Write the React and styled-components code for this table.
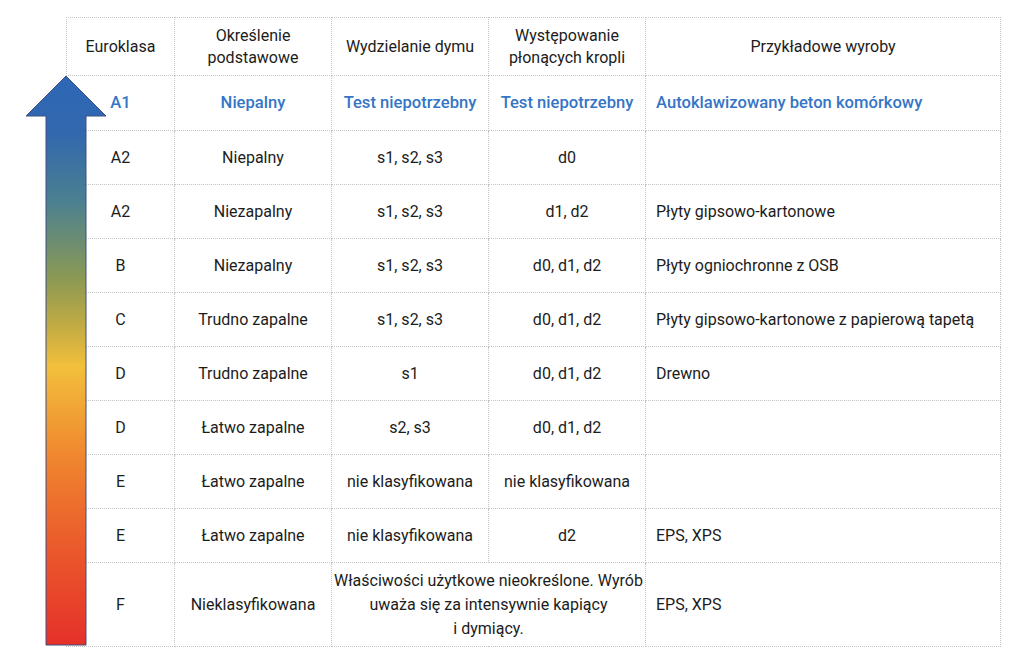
import React from "react";
import styled, { createGlobalStyle } from "styled-components";

const Global = createGlobalStyle`
  html, body { margin: 0; padding: 0; background: #fff; }
  body { font-family: "Roboto", "Liberation Sans", sans-serif; color: #1c1c1c; }
`;

const Page = styled.div`
  width: 1024px;
  height: 667px;
  padding: 17px 0 0 66px;
  box-sizing: border-box;
`;

const Stage = styled.div`
  position: relative;
  width: 934px;
`;

const Table = styled.table`
  border-collapse: collapse;
  table-layout: fixed;
  width: 934px;
  font-size: 16px;
`;

const Col = styled.col`
  width: ${(p) => p.$w}px;
`;

const Row = styled.tr`
  height: ${(p) => p.$h || 54}px;
`;

const Cell = styled.td`
  border: 1px dotted #c4c4c4;
  padding: 0 ${(p) => (p.$left ? "10px" : "2px")};
  text-align: ${(p) => (p.$left ? "left" : "center")};
  vertical-align: middle;
  line-height: ${(p) => p.$lh || 22}px;
  color: ${(p) => (p.$hl ? "#3575c6" : "#1c1c1c")};
  font-size: ${(p) => (p.$hl ? "16.6px" : "inherit")};
  font-weight: ${(p) => (p.$hl ? 500 : 400)};
  white-space: nowrap;
`;

const HeadCell = styled(Cell).attrs({ as: "th" })`
  font-weight: 400;
`;

const Arrow = styled.svg`
  position: absolute;
  left: -41px;
  top: 59px;
  overflow: visible;
`;

const rows = [
  { k: "A1", d: "Niepalny", s: "Test niepotrzebny", p: "Test niepotrzebny", w: "Autoklawizowany beton komórkowy", hl: true },
  { k: "A2", d: "Niepalny", s: "s1, s2, s3", p: "d0", w: "" },
  { k: "A2", d: "Niezapalny", s: "s1, s2, s3", p: "d1, d2", w: "Płyty gipsowo-kartonowe" },
  { k: "B", d: "Niezapalny", s: "s1, s2, s3", p: "d0, d1, d2", w: "Płyty ogniochronne z OSB" },
  { k: "C", d: "Trudno zapalne", s: "s1, s2, s3", p: "d0, d1, d2", w: "Płyty gipsowo-kartonowe z papierową tapetą" },
  { k: "D", d: "Trudno zapalne", s: "s1", p: "d0, d1, d2", w: "Drewno" },
  { k: "D", d: "Łatwo zapalne", s: "s2, s3", p: "d0, d1, d2", w: "" },
  { k: "E", d: "Łatwo zapalne", s: "nie klasyfikowana", p: "nie klasyfikowana", w: "" },
  { k: "E", d: "Łatwo zapalne", s: "nie klasyfikowana", p: "d2", w: "EPS, XPS" },
];

function FireArrow() {
  return (
    <Arrow width="82" height="570" viewBox="0 0 82 570">
      <defs>
        <linearGradient id="fg" x1="0" y1="0" x2="0" y2="1">
          <stop offset="0" stopColor="#2d67b7" />
          <stop offset="0.1" stopColor="#3268ad" />
          <stop offset="0.22" stopColor="#4b8091" />
          <stop offset="0.36" stopColor="#8e9a52" />
          <stop offset="0.45" stopColor="#c9ae42" />
          <stop offset="0.51" stopColor="#f2c03c" />
          <stop offset="0.66" stopColor="#f0892f" />
          <stop offset="0.8" stopColor="#eb612c" />
          <stop offset="1" stopColor="#e5302a" />
        </linearGradient>
      </defs>
      <path
        d="M41 0 L81 40 L61 40 L61 569 L21 569 L21 40 L1 40 Z"
        fill="url(#fg)"
        stroke="#3f4f82"
        strokeWidth="1"
      />
    </Arrow>
  );
}

export default function App() {
  return (
    <Page>
      <Global />
      <Stage>
        <Table>
          <colgroup>
            <Col $w={108} />
            <Col $w={157} />
            <Col $w={157} />
            <Col $w={157} />
            <Col $w={355} />
          </colgroup>
          <thead>
            <Row $h={58}>
              <HeadCell>Euroklasa</HeadCell>
              <HeadCell>Określenie<br />podstawowe</HeadCell>
              <HeadCell>Wydzielanie dymu</HeadCell>
              <HeadCell>Występowanie<br />płonących kropli</HeadCell>
              <HeadCell>Przykładowe wyroby</HeadCell>
            </Row>
          </thead>
          <tbody>
            {rows.map((r, i) => (
              <Row key={i} $h={i === 0 ? 55 : 54}>
                <Cell $hl={r.hl}>{r.k}</Cell>
                <Cell $hl={r.hl}>{r.d}</Cell>
                <Cell $hl={r.hl}>{r.s}</Cell>
                <Cell $hl={r.hl}>{r.p}</Cell>
                <Cell $hl={r.hl} $left>{r.w}</Cell>
              </Row>
            ))}
            <Row $h={84}>
              <Cell>F</Cell>
              <Cell>Nieklasyfikowana</Cell>
              <Cell colSpan={2} $lh={24}>
                Właściwości użytkowe nieokreślone. Wyrób<br />
                uważa się za intensywnie kapiący<br />
                i dymiący.
              </Cell>
              <Cell $left>EPS, XPS</Cell>
            </Row>
          </tbody>
        </Table>
        <FireArrow />
      </Stage>
    </Page>
  );
}
